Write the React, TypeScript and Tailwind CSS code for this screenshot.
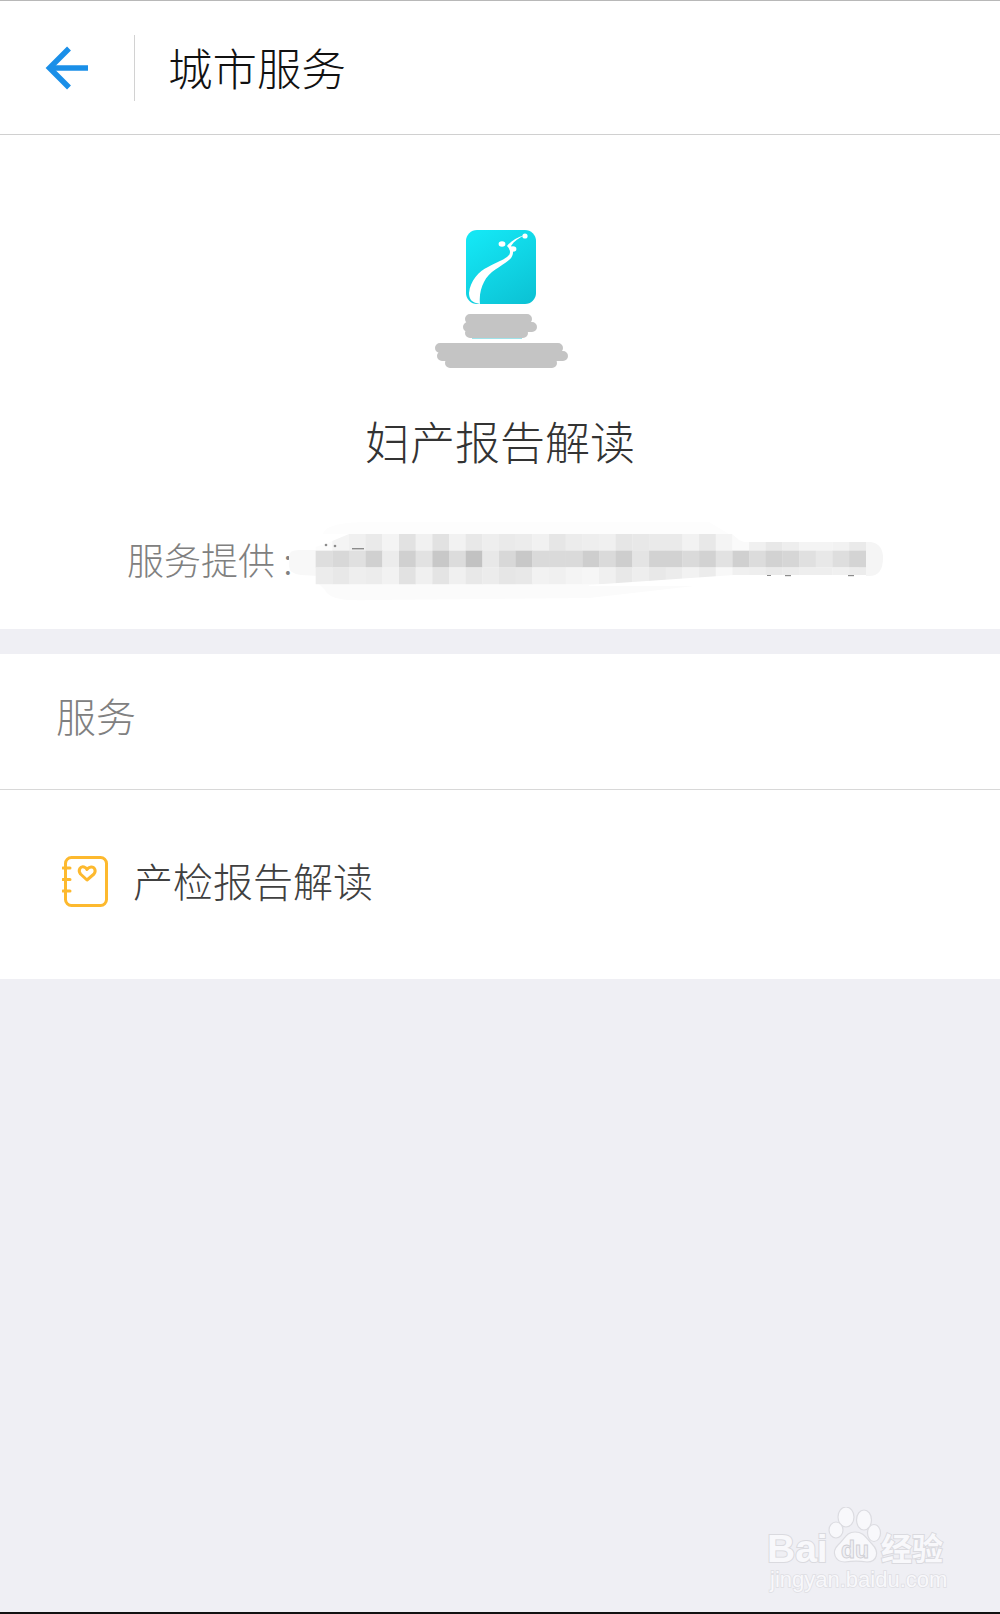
import React from "react";

const cjk = { fontFamily: '"Noto Sans CJK SC", "Noto Sans", sans-serif' };
const latin = { fontFamily: '"Liberation Sans", sans-serif' };

const mosaicRows: number[][] = [
  [252, 244, 240, 234, 244, 226, 241, 226, 242, 232, 238, 234, 236, 241, 230, 236, 238, 240, 230, 232, 234, 234, 242, 232, 244, 250, 240, 232, 238, 244, 244, 242, 234],
  [222, 216, 224, 208, 236, 208, 226, 200, 220, 194, 232, 216, 200, 218, 218, 218, 206, 218, 206, 228, 210, 210, 218, 210, 226, 208, 220, 210, 214, 224, 232, 222, 212],
  [236, 232, 238, 236, 242, 226, 240, 228, 240, 232, 236, 230, 232, 242, 240, 244, 246, 240, 232, 238, 232, 236, 242, 236, 248, 240, 238, 234, 236, 238, 238, 240, 236],
];

function Mosaic() {
  return (
    <svg width="600" height="90" viewBox="0 0 600 90" className="shrink-0 -ml-[3px]" aria-hidden="true">
      <path d="M34 14 Q36 2 80 2 L420 2 L440 14 Z" fill="#fdfdfd" />
      <path d="M28 62 L440 62 L300 78 L80 80 Q40 82 36 70 Z" fill="#fbfbfb" />
      <path d="M0 36 Q0 30 10 30 H30 V56 L12 55 Q0 54 0 46 Z" fill="#f8f8f8" />
      <path d="M570 22 H582 Q594 24 594 38 Q594 56 580 56 H570 Z" fill="#f5f5f5" />
      {mosaicRows.map((row, r) =>
        row.map((v, c) => (
          <rect
            key={`${r}-${c}`}
            x={26.67 + c * 16.67}
            y={14 + r * 16.67}
            width={16.9}
            height={16.9}
            fill={`rgb(${v},${v},${v})`}
          />
        ))
      )}
      {/* white wash left by the retouching over the corners of the mosaic */}
      <path d="M26 14 H60 L36 24 L26 27 Z" fill="#ffffff" />
      <path d="M442 13 H600 V22 H455 L450 20 Z" fill="#ffffff" />
      <path d="M300 65 L445 55 H577 V66 H300 Z" fill="#ffffff" />
      <g fill="#8c8c8c">
        <circle cx="37" cy="25" r="1.3" />
        <circle cx="46" cy="26" r="1.3" />
        <rect x="63" y="28" width="12" height="1.4" />
        <rect x="478" y="55" width="4" height="1" />
        <rect x="496" y="55" width="6" height="1.2" />
        <rect x="559" y="55" width="6" height="1.2" />
      </g>
    </svg>
  );
}

function AppIcon() {
  return (
    <svg width="72" height="76" viewBox="0 0 72 76" className="ml-[2px]" aria-hidden="true">
      <defs>
        <linearGradient id="appg" x1="0.25" y1="0" x2="0.85" y2="1">
          <stop offset="0" stopColor="#14e6f4" />
          <stop offset="1" stopColor="#0cc3d5" />
        </linearGradient>
      </defs>
      <rect x="1" y="1" width="70" height="74" rx="11" fill="url(#appg)" />
      <path
        d="M4 64 C5 52 14 42 23 38 C32 33 38 31 42 28 C46 25 46 21 42 17 C46 12 52 8 60 6 C54 9 49 12 46 17 C49 21 49 27 44 31 C36 38 24 42 19 53 C16 59 14 66 15 75 L11 74 C7 73 4 70 4 64 Z"
        fill="#ffffff"
      />
      <ellipse cx="37" cy="15" rx="3.4" ry="2.8" fill="#fff" />
      <ellipse cx="48" cy="20" rx="3.4" ry="2.8" fill="#fff" />
      <circle cx="60" cy="7" r="2.6" fill="#fff" />
    </svg>
  );
}

function Scribble() {
  return (
    <svg width="136" height="56" viewBox="0 0 136 56" aria-hidden="true" className="mt-[9px]">
      <path d="M40 24.5 H90" stroke="#9fe3ea" strokeWidth="1" fill="none" />
      <path d="M38 5 H95 M36 13 H100 M38 19 H91" stroke="#c4c4c4" strokeWidth="10" strokeLinecap="round" fill="none" />
      <path d="M8 34 H126 M10 42 H131 M18 49 H120" stroke="#c4c4c4" strokeWidth="10" strokeLinecap="round" fill="none" />
    </svg>
  );
}

function NoteIcon() {
  return (
    <svg width="46" height="52" viewBox="0 0 46 52" fill="none" stroke="#fdb92e" strokeWidth="3" strokeLinecap="round" strokeLinejoin="round" className="mb-[6px]" aria-hidden="true">
      <rect x="3.5" y="1.5" width="41" height="48" rx="6" />
      <path d="M1 12 H8 M1 23.5 H8 M1 35 H8" />
      <path d="M25 24 L18.5 18 C15.5 14 18.5 10 22 11 C23.5 11.4 24.5 12.5 25 13.5 C25.8 12.3 27 11.2 29 11 C32.5 10.8 34.5 14.5 32 18 Z" />
    </svg>
  );
}

function Paw() {
  return (
    <svg width="58" height="60" viewBox="0 0 58 60" aria-hidden="true" className="absolute left-[62px] top-[1px]">
      <g fill="#f8f8fb" stroke="#dcdce1" strokeWidth="1.2">
        <ellipse cx="18" cy="10" rx="8" ry="10" />
        <ellipse cx="36" cy="13" rx="7.5" ry="10" />
        <ellipse cx="8" cy="23" rx="7" ry="8" />
        <ellipse cx="46" cy="26" rx="6.5" ry="8.5" />
        <path d="M27 25 C36 25 38 31 44 37 C52 45 49 55 39 55 C33 54 23 54 17 55 C7 55 3 45 10 38 C17 32 18 25 27 25 Z" />
      </g>
      <text x="27" y="51" textAnchor="middle" fill="#f0f0f4" stroke="#cfcfd4" strokeWidth="0.9" fontSize="23" fontWeight="700" style={latin}>du</text>
    </svg>
  );
}

export default function App() {
  return (
    <div className="w-[1000px] h-[1614px] bg-[#efeff4] flex flex-col relative overflow-hidden" style={cjk}>
      <header className="h-[135px] bg-white border-t border-t-[#b8b8b8] border-b border-b-[#d0d0d0] flex items-center shrink-0">
        <div className="w-[134px] flex justify-center pr-[3px]">
          <svg width="44" height="44" viewBox="0 0 44 44" fill="none" stroke="#1a8fe8" strokeWidth="5.5" strokeLinecap="butt" strokeLinejoin="miter" aria-hidden="true">
            <path d="M6 22 H44" />
            <path d="M25 2.5 L5.5 22 L25 41.5" />
          </svg>
        </div>
        <div className="w-[1px] h-[66px] bg-[#d2d2d2]" />
        <h1 className="ml-[33px] text-[44.5px] leading-none font-light text-[#111111]">城市服务</h1>
      </header>

      <section className="h-[494px] bg-white flex flex-col items-center shrink-0 pt-[94px]">
        <AppIcon />
        <Scribble />
        <div className="mt-[48px] text-[45px] leading-none font-light text-[#333333]">妇产报告解读</div>
        <div className="mt-[57px] self-start flex items-center pl-[127px]">
          <span className="text-[37px] leading-none font-light text-[#808080] whitespace-nowrap pb-[12px]">服务提供 :</span>
          <Mosaic />
        </div>
      </section>

      <section className="mt-[25px] bg-white flex flex-col shrink-0">
        <div className="h-[136px] border-b border-b-[#d8d8d8] flex items-center pl-[56px] pb-[14px] text-[40px] leading-none font-light text-[#808080]">服务</div>
        <div className="h-[189px] flex items-center pl-[62px]">
          <NoteIcon />
          <span className="ml-[25px] pb-[10px] text-[40px] leading-none font-light text-[#404040]">产检报告解读</span>
        </div>
      </section>

      <div className="absolute left-[766px] top-[1506px] w-[200px] h-[100px] text-[#f8f8fb]">
        <div className="absolute left-[1px] top-[23px] text-[39px] leading-none font-bold [-webkit-text-stroke:2px_#dadadf] [paint-order:stroke_fill]" style={latin}>Bai</div>
        <Paw />
        <div className="absolute left-[115px] top-[25px] text-[31px] leading-none font-bold whitespace-nowrap [-webkit-text-stroke:2px_#dadadf] [paint-order:stroke_fill]">经验</div>
        <div className="absolute left-[4px] top-[63px] text-[22px] leading-none whitespace-nowrap [-webkit-text-stroke:1.5px_#dedee3] [paint-order:stroke_fill]" style={latin}>jingyan.baidu.com</div>
      </div>

      <div className="absolute left-0 right-0 bottom-0 h-[2px] bg-[#111111]" />
    </div>
  );
}
